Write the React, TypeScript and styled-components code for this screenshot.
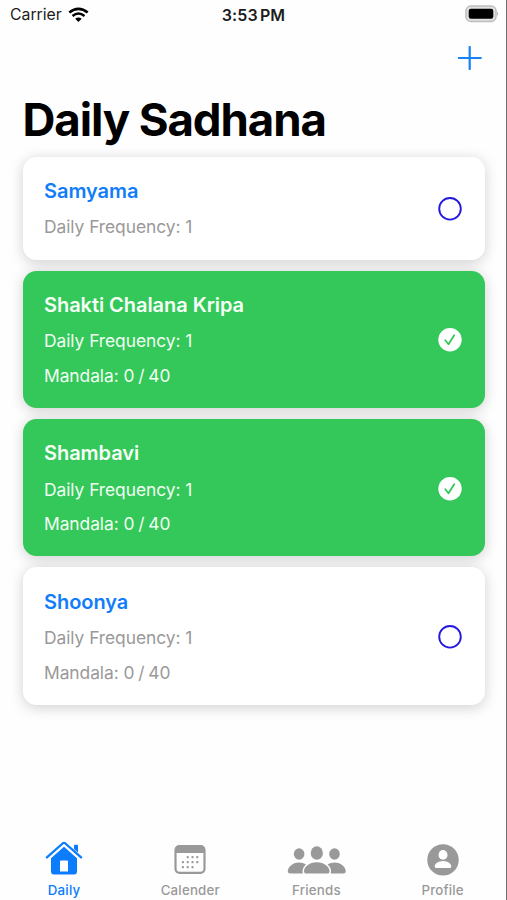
import React from "react";
import styled, { createGlobalStyle } from "styled-components";

const GlobalStyle = createGlobalStyle`
  * { box-sizing: border-box; }
  body { margin: 0; background: #fff; }
`;

const Screen = styled.div`
  width: 507px;
  height: 900px;
  display: flex;
  flex-direction: column;
  overflow: hidden;
  background: #fefefe;
  border-right: 1px solid #707070;
  font-family: Inter, "Liberation Sans", sans-serif;
`;

const StatusBar = styled.header`
  height: 30px;
  flex: none;
  padding: 0 7px 0 10px;
  display: grid;
  grid-template-columns: 1fr auto 1fr;
  align-items: center;
  color: #1c1c1c;
`;

const CarrierInfo = styled.div`
  display: flex;
  align-items: center;
  gap: 6px;
  font-size: 15.8px;
  line-height: 30px;
  letter-spacing: 0;
`;

const Clock = styled.time`
  margin-left: -2px;
  font-size: 16px;
  font-weight: 600;
  line-height: 30px;
  letter-spacing: 0.1px;
  word-spacing: -2px;
`;

const BatterySlot = styled.div`
  display: flex;
  justify-content: flex-end;
  padding-bottom: 2px;
`;

const NavBar = styled.nav`
  height: 56px;
  flex: none;
  display: flex;
  justify-content: flex-end;
  align-items: center;
  padding: 0 24px 0 0;
`;

const AddButton = styled.button`
  border: 0;
  padding: 0;
  background: none;
  display: flex;
`;

const PageTitle = styled.h1`
  margin: 0;
  padding-left: 22.5px;
  height: 70.7px;
  flex: none;
  font-size: 45.6px;
  font-weight: 700;
  line-height: 68px;
  letter-spacing: -1.1px;
  color: #000;
`;

const CardList = styled.main`
  flex: 1;
  display: flex;
  flex-direction: column;
  gap: 11px;
  padding: 0 21px 0 22.5px;
`;

const Card = styled.article<{ $done: boolean }>`
  display: flex;
  justify-content: space-between;
  align-items: center;
  padding: 21.3px 23px 18.9px 21.5px;
  border-radius: 13.5px;
  background: ${(p) => (p.$done ? "#34c759" : "#fff")};
  color: ${(p) => (p.$done ? "#f1fff3" : "#999")};
  box-shadow: 0 2.7px 13.5px rgba(0, 0, 0, 0.18);
`;

const CardTitle = styled.h2<{ $done: boolean }>`
  margin: 0 0 10.5px;
  font-size: 20px;
  font-weight: 600;
  line-height: 26px;
  letter-spacing: -0.05px;
  color: ${(p) => (p.$done ? "#f6fff7" : "#127dfb")};
`;

const Detail = styled.p`
  margin: 0 0 8.3px;
  font-size: 17.4px;
  line-height: 26.2px;
  letter-spacing: -0.06px;
  &:last-child { margin-bottom: 0; }
`;

const Count = styled.span`
  word-spacing: -1px;
`;

const TabBar = styled.footer`
  height: 66px;
  flex: none;
  padding-left: 1px;
  display: grid;
  grid-template-columns: repeat(4, 126.2px);
`;

const Tab = styled.div<{ $active?: boolean }>`
  display: flex;
  flex-direction: column;
  align-items: center;
  color: ${(p) => (p.$active ? "#0a7cfc" : "#999")};
`;

const TabIcon = styled.div`
  height: 46px;
  padding-top: 6.5px;
  display: flex;
  align-items: flex-start;
`;

const TabLabel = styled.span`
  font-size: 13.3px;
  font-weight: 500;
  line-height: 20px;
  letter-spacing: 0.2px;
`;

const WifiIcon = () => (
  <svg width="21" height="16" viewBox="0 0 21 16" fill="none" stroke="#000">
    <path d="M1.3 5.5Q10.4-1.8 19.7 5.5" strokeWidth="2.7" />
    <path d="M4.5 9Q10.4 4.1 16.5 9" strokeWidth="2.5" />
    <path d="M10.4 15 7.2 11.8Q10.4 9 13.7 11.8Z" fill="#000" stroke="none" />
  </svg>
);

const BatteryIcon = () => (
  <svg width="34" height="18" viewBox="0 0 34 18">
    <rect x="1" y="1" width="30" height="15.5" rx="4.8" fill="#e0e0e0" stroke="#bdbdbd" strokeWidth="1.5" />
    <rect x="3.7" y="3.7" width="24.6" height="10.1" rx="2.3" fill="#000" />
    <path d="M32 6.5Q34 8.8 32 11Z" fill="#aaa" />
  </svg>
);

const PlusIcon = () => (
  <svg width="24" height="24" viewBox="0 0 24 24" stroke="#1682f8" strokeWidth="2.2" strokeLinecap="round">
    <path d="M11.7 1v22M.9 12h21.9" />
  </svg>
);

const StatusIcon = ({ done }: { done: boolean }) =>
  done ? (
    <svg width="24" height="24" viewBox="0 0.4 24 24">
      <circle cx="12" cy="12.1" r="11.7" fill="#fff" />
      <path d="m7.3 12.7 3.2 4 5.7-9" fill="none" stroke="#34c759" strokeWidth="1.8" strokeLinecap="round" strokeLinejoin="round" />
    </svg>
  ) : (
    <svg width="24" height="24" viewBox="0 0.2 24 24">
      <circle cx="12" cy="12" r="10.8" fill="none" stroke="#2218de" strokeWidth="1.9" />
    </svg>
  );

const HouseIcon = () => (
  <svg width="38" height="36" viewBox="0 0 38 36">
    <path
      d="M29 6V4.4Q29 3.7 29.7 3.7h2.6q.7 0 .7.7v7.2l-4-3.6Z"
      fill="currentColor"
    />
    <path d="M1.9 16.4 17.6 2.5q1.4-1.2 2.8 0l15.7 13.9" fill="none" stroke="currentColor" strokeWidth="2.3" strokeLinecap="round" />
    <path
      fillRule="evenodd"
      d="M19 5.7 32 17.3V30.5q0 3-3 3H9q-3 0-3-3V17.3Zm-3.2 13.7q-.8 0-.8.8v10.3h8V20.2q0-.8-.8-.8Z"
      fill="currentColor"
    />
  </svg>
);

const CalendarIcon = () => {
  const dots = [
    [13.4, 12], [18.2, 12], [23, 12],
    [8.6, 17], [13.4, 17], [18.2, 17], [23, 17],
    [8.6, 22], [13.4, 22], [18.2, 22],
  ];
  return (
    <svg width="32" height="36" viewBox="0 -4 32 36">
      <rect x="1.5" y="1.2" width="29" height="26.6" rx="4" fill="none" stroke="currentColor" strokeWidth="2.2" />
      <path d="M1 8V5q0-4.5 4.5-4.5h21Q31 .5 31 5v3Z" fill="currentColor" />
      {dots.map(([x, y]) => (
        <rect key={`${x}-${y}`} x={x - 0.8} y={y - 0.9} width="2.2" height="2.2" rx="0.8" fill="currentColor" />
      ))}
    </svg>
  );
};

const FriendsIcon = () => (
  <svg width="60" height="36" viewBox="-0.8 0 60 36" fill="currentColor">
    <ellipse cx="12.3" cy="13" rx="5.3" ry="5.8" />
    <ellipse cx="47.7" cy="13" rx="5.3" ry="5.8" />
    <ellipse cx="30" cy="12" rx="6.1" ry="6.8" />
    <path d="M19.2 23.2Q15.9 21.5 12.2 21.5C5.6 21.5 1 26.3 1 30.5Q1 32.6 3.4 32.6H16q-1.4-4.5 3.2-9.4Z" />
    <path d="M40.8 23.2q3.3-1.7 7-1.7C54.4 21.5 59 26.3 59 30.5q0 2.1-2.4 2.1H44q1.4-4.5-3.2-9.4Z" />
    <path d="M30 21.2c-7.5 0-12.8 4.8-12.8 9 0 1.5.9 2.4 2.5 2.4h20.6c1.6 0 2.5-.9 2.5-2.4 0-4.2-5.3-9-12.8-9Z" />
  </svg>
);

const ProfileIcon = () => (
  <svg width="32" height="36" viewBox="0 0 32 36">
    <circle cx="16" cy="18.9" r="15.7" fill="currentColor" />
    <ellipse cx="16" cy="13.9" rx="4.5" ry="4.9" fill="#fff" />
    <path d="M16 20.1c-4.9 0-8.3 2.8-8.3 5.5 0 .9.5 1.3 1.3 1.3h14c.8 0 1.3-.4 1.3-1.3 0-2.7-3.4-5.5-8.3-5.5Z" fill="#fff" />
  </svg>
);

const practices = [
  { name: "Samyama", frequency: 1, done: false },
  { name: "Shakti Chalana Kripa", frequency: 1, mandala: "0 / 40", done: true },
  { name: "Shambavi", frequency: 1, mandala: "0 / 40", done: true },
  { name: "Shoonya", frequency: 1, mandala: "0 / 40", done: false },
];

const tabs = [
  { label: "Daily", icon: <HouseIcon />, active: true },
  { label: "Calender", icon: <CalendarIcon /> },
  { label: "Friends", icon: <FriendsIcon /> },
  { label: "Profile", icon: <ProfileIcon /> },
];

export default function App() {
  return (
    <>
      <GlobalStyle />
      <Screen>
        <StatusBar>
          <CarrierInfo>
            Carrier
            <WifiIcon />
          </CarrierInfo>
          <Clock>3:53 PM</Clock>
          <BatterySlot>
            <BatteryIcon />
          </BatterySlot>
        </StatusBar>
        <NavBar>
          <AddButton aria-label="Add">
            <PlusIcon />
          </AddButton>
        </NavBar>
        <PageTitle>Daily Sadhana</PageTitle>
        <CardList>
          {practices.map((p) => (
            <Card key={p.name} $done={p.done}>
              <div>
                <CardTitle $done={p.done}>{p.name}</CardTitle>
                <Detail>Daily Frequency: {p.frequency}</Detail>
                {p.mandala && (
                  <Detail>
                    Mandala: <Count>{p.mandala}</Count>
                  </Detail>
                )}
              </div>
              <StatusIcon done={p.done} />
            </Card>
          ))}
        </CardList>
        <TabBar>
          {tabs.map((t) => (
            <Tab key={t.label} $active={t.active}>
              <TabIcon>{t.icon}</TabIcon>
              <TabLabel>{t.label}</TabLabel>
            </Tab>
          ))}
        </TabBar>
      </Screen>
    </>
  );
}
